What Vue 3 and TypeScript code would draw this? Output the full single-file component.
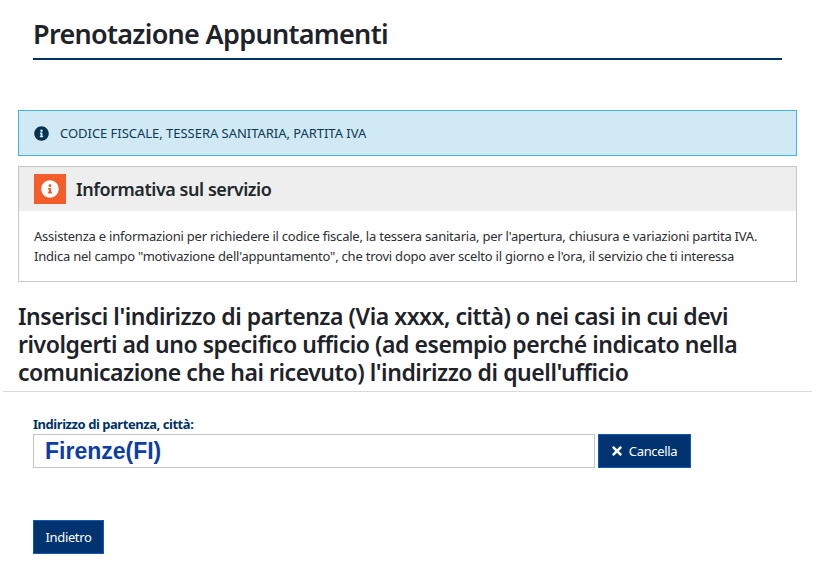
<script setup lang="ts">
const infoPath =
  'M256 8C119.043 8 8 119.083 8 256c0 136.997 111.043 248 248 248s248-111.003 248-248C504 119.083 392.957 8 256 8zm0 110c23.196 0 42 18.804 42 42s-18.804 42-42 42-42-18.804-42-42 18.804-42 42-42zm56 254c0 6.627-5.373 12-12 12h-88c-6.627 0-12-5.373-12-12v-24c0-6.627 5.373-12 12-12h12v-64h-12c-6.627 0-12-5.373-12-12v-24c0-6.627 5.373-12 12-12h64c6.627 0 12 5.373 12 12v100h12c6.627 0 12 5.373 12 12v24z'
const timesPath =
  'M242.72 256l100.07-100.07c12.28-12.28 12.28-32.19 0-44.48l-22.24-22.24c-12.28-12.28-32.19-12.28-44.48 0L176 189.28 75.93 89.21c-12.28-12.28-32.19-12.28-44.48 0L9.21 111.45c-12.28 12.28-12.28 32.19 0 44.48L109.28 256 9.21 356.07c-12.28 12.28-12.28 32.19 0 44.48l22.24 22.24c12.28 12.28 32.2 12.28 44.48 0L176 322.72l100.07 100.07c12.28 12.28 32.2 12.28 44.48 0l22.24-22.24c12.28-12.28 12.28-32.19 0-44.48L242.72 256z'
</script>

<template>
  <div class="page">
    <div class="title-wrap">
      <h1 class="title">Prenotazione Appuntamenti</h1>
    </div>

    <div class="notices">
      <div class="alert">
        <svg class="alert-icon" viewBox="0 0 512 512"><path :d="infoPath" /></svg>
        <span>CODICE FISCALE, TESSERA SANITARIA, PARTITA IVA</span>
      </div>

      <div class="panel">
        <div class="panel-head">
          <span class="badge">
            <svg viewBox="0 0 512 512"><path :d="infoPath" /></svg>
          </span>
          <h2>Informativa sul servizio</h2>
        </div>
        <div class="panel-body">
          <p>Assistenza e informazioni per richiedere il codice fiscale, la tessera sanitaria, per l'apertura, chiusura e variazioni partita IVA.</p>
          <p>Indica nel campo "motivazione dell'appuntamento", che trovi dopo aver scelto il giorno e l'ora, il servizio che ti interessa</p>
        </div>
      </div>

      <h3 class="prompt">Inserisci l'indirizzo di partenza (Via xxxx, città) o nei casi in cui devi rivolgerti ad uno specifico ufficio (ad esempio perché indicato nella comunicazione che hai ricevuto) l'indirizzo di quell'ufficio</h3>
    </div>

    <hr class="divider" />

    <form class="address" @submit.prevent>
      <label class="field-label" for="start">Indirizzo di partenza, città:</label>
      <div class="field-row">
        <input id="start" class="field" type="text" value="Firenze(FI)" />
        <button class="btn btn-clear" type="button">
          <svg viewBox="0 0 352 512"><path :d="timesPath" /></svg>
          Cancella
        </button>
      </div>
      <button class="btn btn-back" type="button">Indietro</button>
    </form>
  </div>
</template>

<style>
html,
body {
  margin: 0;
  background: #fff;
}
</style>

<style scoped>
.page {
  width: 826px;
  height: 574px;
  overflow: hidden;
  font-family: "Noto Sans", "Open Sans", sans-serif;
  color: #212529;
}

.title-wrap {
  margin: 0 44px 0 33px;
  padding-top: 15px;
  height: 43px;
  border-bottom: 2px solid #003366;
}

.title {
  margin: 0;
  font-size: 27px;
  line-height: 38px;
  font-weight: 600;
  letter-spacing: -0.7px;
  color: #1d2329;
}

.notices {
  margin: 50px 29px 0 18px;
}

.alert {
  display: flex;
  align-items: center;
  gap: 11px;
  height: 46px;
  box-sizing: border-box;
  padding-left: 15px;
  background: #d1e9f5;
  border: 1px solid #3fb6dc;
  color: #0b3a55;
  font-size: 13px;
  letter-spacing: -0.03px;
}

.alert-icon {
  width: 15px;
  height: 15px;
  fill: #04334f;
}

.panel {
  margin-top: 10px;
  height: 116px;
  box-sizing: border-box;
  border: 1px solid #c6c6c6;
}

.panel-head {
  display: flex;
  align-items: center;
  gap: 10px;
  height: 44px;
  padding-left: 15px;
  background: #eeeeee;
}

.panel-head h2 {
  margin: 0;
  font-size: 18px;
  font-weight: 600;
  letter-spacing: -0.45px;
  color: #22272c;
}

.badge {
  display: flex;
  align-items: center;
  justify-content: center;
  width: 32px;
  height: 30px;
  background: #f35d2b;
}

.badge svg {
  width: 18px;
  height: 18px;
  fill: #fff;
}

.panel-body {
  padding: 15px 15px 0;
  font-size: 13px;
  line-height: 20px;
  letter-spacing: -0.22px;
  color: #2a2f33;
}

.panel-body p {
  margin: 0;
  white-space: nowrap;
}

.prompt {
  margin: 20px 0 0;
  font-size: 23px;
  line-height: 28px;
  font-weight: 600;
  letter-spacing: -0.45px;
  color: #1d2329;
}

.divider {
  margin: 5px 14px 0 3px;
  border: 0;
  border-top: 1px solid #d9d9d9;
}

.address {
  margin: 24px 0 0 33px;
}

.field-label {
  display: block;
  margin-bottom: 2px;
  font-size: 13px;
  line-height: 16px;
  font-weight: 700;
  letter-spacing: -0.45px;
  color: #003366;
}

.field-row {
  display: flex;
  gap: 3px;
}

.field {
  width: 562px;
  height: 34px;
  box-sizing: border-box;
  padding: 0 11px;
  border: 1px solid #c4c4c4;
  border-radius: 0;
  outline: none;
  font-family: "Liberation Sans", Arial, sans-serif;
  font-size: 23px;
  font-weight: 700;
  color: #0d3ea5;
}

.btn {
  display: flex;
  align-items: center;
  justify-content: center;
  height: 34px;
  box-sizing: border-box;
  padding: 0;
  background: #003370;
  border: 1px solid #0b5cb8;
  border-radius: 0;
  color: #fff;
  font-family: inherit;
  font-size: 13px;
  letter-spacing: -0.35px;
}

.btn-clear {
  width: 93px;
  gap: 7px;
}

.btn-clear svg {
  width: 10px;
  height: 14px;
  fill: #fff;
}

.btn-back {
  width: 71px;
  margin-top: 52px;
}
</style>
